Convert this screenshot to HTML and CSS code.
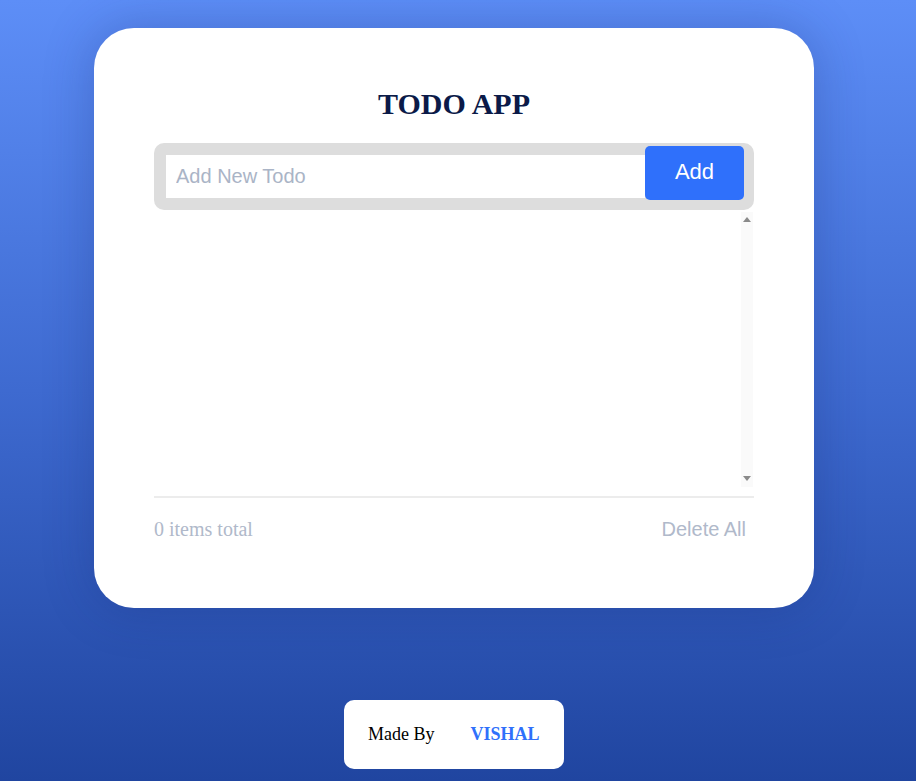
FILE: index.html
```html
<!DOCTYPE html>
<html>
<head>
<meta charset="utf-8">
<title>Todo App</title>
<link rel="stylesheet" href="styles.css">
</head>
<body>
<main class="card">
  <h1 class="title">TODO APP</h1>
  <div class="entry">
    <input class="entry-input" type="text" placeholder="Add New Todo">
    <button class="entry-btn">Add</button>
  </div>
  <div class="list-wrap">
    <ul class="list"></ul>
    <div class="rail" aria-hidden="true">
      <span class="arrow arrow-up"></span>
      <span class="arrow arrow-down"></span>
    </div>
  </div>
  <div class="card-footer">
    <span class="count">0 items total</span>
    <button class="delete-all">Delete All</button>
  </div>
</main>
<footer class="credit">
  <span class="credit-label">Made By</span>
  <span class="credit-name">VISHAL</span>
</footer>
</body>
</html>
```

FILE: styles.css
```css
html, body {
  margin: 0;
  padding: 0;
}
body {
  min-height: 781px;
  background: linear-gradient(180deg, #5d8ef7 0%, #3e6ad0 50%, #2045a0 100%);
  font-family: "Liberation Serif", "Times New Roman", serif;
  display: flex;
  flex-direction: column;
  align-items: center;
  padding: 28px 8px 0 0;
  box-sizing: border-box;
}
.card {
  width: 720px;
  height: 580px;
  box-sizing: border-box;
  background: #fff;
  border-radius: 40px;
  padding: 60px 60px 0 60px;
  box-shadow: 0 0 50px rgba(20, 40, 110, 0.28);
  display: flex;
  flex-direction: column;
}
.title {
  margin: 0;
  text-align: center;
  font-size: 30px;
  line-height: 32px;
  font-weight: bold;
  color: #0b1a48;
}
.entry {
  margin-top: 23px;
  height: 67px;
  box-sizing: border-box;
  background: #dddddd;
  border-radius: 10px;
  display: flex;
  align-items: flex-start;
  padding: 3px 10px 0 12px;
}
.entry-input {
  margin-top: 9px;
  flex: 1;
  height: 43px;
  box-sizing: border-box;
  border: none;
  outline: none;
  padding: 0 10px;
  font-family: "Liberation Sans", Arial, sans-serif;
  font-size: 20px;
  color: #333;
  background: #fff;
}
.entry-input::placeholder {
  color: #aab4c6;
}
.entry-btn {
  width: 99px;
  height: 54px;
  border: none;
  border-radius: 5px;
  background: #2f70fb;
  color: #fff;
  font-family: "Liberation Sans", Arial, sans-serif;
  font-size: 22px;
  padding: 0;
  padding-bottom: 3px;
}
.list-wrap {
  margin-top: 2px;
  height: 275px;
  display: flex;
  padding-right: 1px;
}
.list {
  flex: 1;
  list-style: none;
  margin: 0;
  padding: 0;
  overflow: hidden;
}
.rail {
  width: 12px;
  background: #fafafa;
  display: flex;
  flex-direction: column;
  justify-content: space-between;
  align-items: center;
  padding: 5px 0 6px;
  box-sizing: border-box;
}
.arrow {
  width: 0;
  height: 0;
  border-left: 4px solid transparent;
  border-right: 4px solid transparent;
}
.arrow-up {
  border-bottom: 5px solid #8a8a8a;
}
.arrow-down {
  border-top: 5px solid #8a8a8a;
}
.card-footer {
  border-top: 2px solid #ececec;
  margin-top: 9px;
  padding-top: 19px;
  display: flex;
  justify-content: space-between;
  align-items: center;
}
.count {
  font-size: 20px;
  line-height: 24px;
  color: #b0b9ca;
}
.delete-all {
  border: none;
  background: none;
  padding: 0 8px 0 0;
  font-family: "Liberation Sans", Arial, sans-serif;
  font-size: 20px;
  line-height: 22px;
  color: #b0b9ca;
}
.credit {
  margin-top: 92px;
  width: 220px;
  height: 69px;
  box-sizing: border-box;
  background: #fff;
  border-radius: 10px;
  display: flex;
  align-items: center;
  padding: 0 24px;
  gap: 36px;
  font-size: 18px;
}
.credit-label {
  color: #000;
}
.credit-name {
  color: #2f70fb;
  font-weight: bold;
}
```
